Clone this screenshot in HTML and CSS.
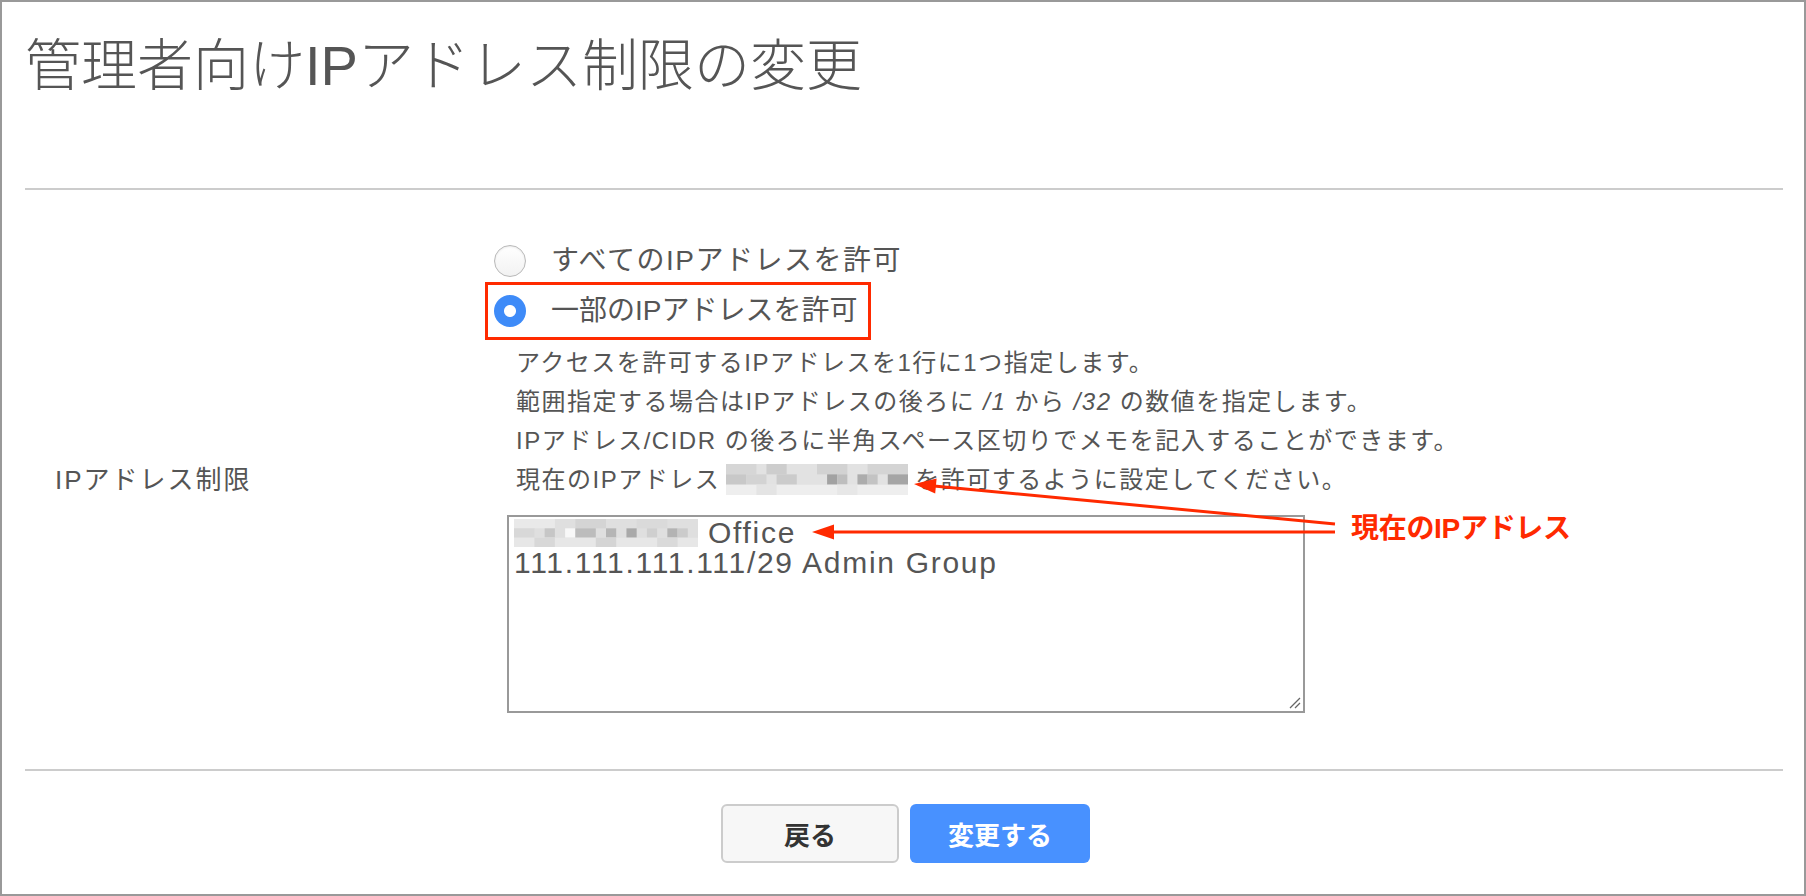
FILE: index.html
```html
<!DOCTYPE html>
<html lang="ja">
<head>
<meta charset="utf-8">
<title>管理者向けIPアドレス制限の変更</title>
<link rel="stylesheet" href="styles.css">
</head>
<body>
<div class="page">
  <h1 class="title">管理者向けIPアドレス制限の変更</h1>
  <div class="rule rule-top"></div>
  <div class="row">
    <div class="label">IPアドレス制限</div>
    <div class="field">
      <label class="radio radio-all"><span class="dot"></span><span class="radio-text">すべてのIPアドレスを許可</span></label>
      <label class="radio radio-some checked marked"><span class="dot"></span><span class="radio-text">一部のIPアドレスを許可</span></label>
      <div class="help">
        <p>アクセスを許可するIPアドレスを1行に1つ指定します。</p>
        <p>範囲指定する場合はIPアドレスの後ろに <i>/1</i> から <i>/32</i> の数値を指定します。</p>
        <p>IPアドレス/CIDR の後ろに半角スペース区切りでメモを記入することができます。</p>
        <p>現在のIPアドレス<svg class="mosaic mosaic-help" viewBox="0 0 18 3" preserveAspectRatio="none">
          <rect x="0" y="0" width="18" height="3" fill="#e2e2e2"/>
          <rect x="0" y="0" width="3" height="1" fill="#d6d6d6"/>
          <rect x="4" y="0" width="2" height="1" fill="#cdcdcd"/>
          <rect x="9" y="0" width="3" height="1" fill="#d2d2d2"/>
          <rect x="14" y="0" width="4" height="1" fill="#d4d4d4"/>
          <rect x="0" y="1" width="2" height="1" fill="#c8c8c8"/>
          <rect x="2" y="1" width="2" height="1" fill="#d3d3d3"/>
          <rect x="5" y="1" width="2" height="1" fill="#cbcbcb"/>
          <rect x="10" y="1" width="1" height="1" fill="#a2a2a2"/>
          <rect x="11" y="1" width="1" height="1" fill="#bebebe"/>
          <rect x="13" y="1" width="1" height="1" fill="#acacac"/>
          <rect x="14" y="1" width="1" height="1" fill="#c3c3c3"/>
          <rect x="16" y="1" width="2" height="1" fill="#a5a5a5"/>
          <rect x="0" y="2" width="18" height="1" fill="#eeeeee"/>
          <rect x="3" y="2" width="2" height="1" fill="#e4e4e4"/>
          <rect x="11" y="2" width="2" height="1" fill="#e7e7e7"/>
        </svg>を許可するように設定してください。</p>
      </div>
      <div class="textbox">
        <div class="tline"><svg class="mosaic mosaic-text" viewBox="0 0 18 3" preserveAspectRatio="none">
          <rect x="0" y="0" width="18" height="3" fill="#dfdfdf"/>
          <rect x="0" y="0" width="4" height="1" fill="#e9e9e9"/>
          <rect x="6" y="0" width="3" height="1" fill="#d4d4d4"/>
          <rect x="12" y="0" width="3" height="1" fill="#dadada"/>
          <rect x="0" y="1" width="2" height="1" fill="#d8d8d8"/>
          <rect x="3" y="1" width="1" height="1" fill="#c6c6c6"/>
          <rect x="5" y="1" width="1" height="1" fill="#f8f8f8"/>
          <rect x="6" y="1" width="2" height="1" fill="#bcbcbc"/>
          <rect x="9" y="1" width="1" height="1" fill="#b5b5b5"/>
          <rect x="11" y="1" width="1" height="1" fill="#a9a9a9"/>
          <rect x="13" y="1" width="1" height="1" fill="#cfcfcf"/>
          <rect x="15" y="1" width="1" height="1" fill="#b3b3b3"/>
          <rect x="16" y="1" width="1" height="1" fill="#cbcbcb"/>
          <rect x="0" y="2" width="18" height="1" fill="#e7e7e7"/>
          <rect x="2" y="2" width="2" height="1" fill="#d8d8d8"/>
          <rect x="8" y="2" width="2" height="1" fill="#d5d5d5"/>
          <rect x="14" y="2" width="2" height="1" fill="#dadada"/>
        </svg> Office</div>
        <div class="tline">111.111.111.111/29 Admin Group</div>
        <svg class="grip" viewBox="0 0 12 12"><path d="M1 11 L11 1 M6 11 L11 6" stroke="#666" stroke-width="1.3" fill="none"/></svg>
      </div>
    </div>
  </div>
  <div class="rule rule-bottom"></div>
  <div class="actions">
    <button class="btn btn-back" type="button">戻る</button>
    <button class="btn btn-submit" type="button">変更する</button>
  </div>
  <div class="annot">
    <svg class="annot-svg" width="1806" height="896" viewBox="0 0 1806 896">
      <line x1="1335" y1="524" x2="934" y2="486" stroke="#ff2a00" stroke-width="3"/>
      <polygon points="914,484 936.6,478.4 935.2,493.4" fill="#ff2a00"/>
      <line x1="1335" y1="532" x2="832" y2="532" stroke="#ff2a00" stroke-width="3"/>
      <polygon points="812,532 834,524.5 834,539.5" fill="#ff2a00"/>
    </svg>
    <span class="annot-label">現在のIPアドレス</span>
  </div>
</div>
</body>
</html>
```
FILE: styles.css
```css
html, body {
  margin: 0;
  padding: 0;
  background: #fff;
}

.page {
  position: relative;
  box-sizing: border-box;
  width: 1806px;
  height: 896px;
  border: 2px solid #999;
  background: #fff;
  color: #555;
  font-family: "Liberation Sans", "Noto Sans CJK JP", sans-serif;
  overflow: hidden;
}

.title {
  margin: 0;
  padding: 30px 0 0 23px;
  height: 67px;
  font-size: 56px;
  line-height: 67px;
  font-weight: 300;
  color: #555;
}

.rule {
  height: 2px;
  background: #ccc;
  margin: 0 21px 0 23px;
}

.rule-top {
  margin-top: 89px;
}

.row {
  display: flex;
  padding: 46px 0 56px 53px;
}

.label {
  width: 439px;
  flex: none;
  align-self: center;
  padding-top: 6px;
  font-size: 26px;
  letter-spacing: 2px;
  color: #555;
}

.field {
  display: flex;
  flex-direction: column;
  align-items: flex-start;
}

.radio {
  position: relative;
  display: flex;
  align-items: center;
  height: 50px;
  font-size: 28px;
  color: #555;
}

.radio-all {
  letter-spacing: 1.5px;
}

.radio-some {
  letter-spacing: 0;
}

.radio-text {
  position: relative;
  top: -3px;
}

.dot {
  width: 32px;
  height: 32px;
  box-sizing: border-box;
  border-radius: 50%;
  margin-right: 25px;
  border: 1px solid #b9b9b9;
  background: linear-gradient(#ffffff, #f2f2f2);
  box-shadow: inset 0 1px 2px rgba(0, 0, 0, 0.08);
}

.radio.checked .dot {
  border: none;
  box-shadow: none;
  background: radial-gradient(circle, #fff 0, #fff 5.5px, #3e8bf8 6.5px);
}

.radio.marked::before {
  content: "";
  position: absolute;
  top: -4px;
  bottom: -4px;
  left: -9px;
  right: -14px;
  border: 3px solid #ff2a00;
}

.help {
  margin: 7px 0 0 22px;
  font-size: 24px;
  line-height: 39px;
  letter-spacing: 1.5px;
  color: #555;
}

.help p {
  margin: 0;
  white-space: nowrap;
}

.mosaic {
  display: inline-block;
  vertical-align: middle;
}

.mosaic-help {
  width: 182px;
  height: 31px;
  margin: 0 7px 0 6px;
  position: relative;
  top: -2px;
}

.textbox {
  position: relative;
  margin: 16px 0 0 13px;
  width: 798px;
  height: 198px;
  box-sizing: border-box;
  border: 2px solid #999;
  padding: 1px 5px;
  font-size: 30px;
  line-height: 30px;
  letter-spacing: 1.7px;
  color: #555;
  background: #fff;
}

.tline {
  white-space: nowrap;
}

.mosaic-text {
  width: 184px;
  height: 28px;
  vertical-align: -4px;
}

.grip {
  position: absolute;
  right: 2px;
  bottom: 2px;
  width: 12px;
  height: 12px;
}

.actions {
  display: flex;
  justify-content: center;
  gap: 11px;
  padding: 33px 0 0 5px;
}

.btn {
  height: 59px;
  box-sizing: border-box;
  border-radius: 6px;
  font-family: "Liberation Sans", "Noto Sans CJK JP", sans-serif;
  font-size: 26px;
  font-weight: 700;
  display: flex;
  align-items: center;
  justify-content: center;
  padding: 0;
  margin: 0;
}

.btn-back {
  width: 178px;
  border: 2px solid #ccc;
  background: #f7f7f7;
  color: #333;
}

.btn-submit {
  width: 180px;
  border: none;
  background: #4891ff;
  color: #fff;
}

.annot {
  position: absolute;
  top: -2px;
  left: -2px;
  width: 1806px;
  height: 896px;
  pointer-events: none;
}

.annot-svg {
  position: absolute;
  top: 0;
  left: 0;
}

.annot-label {
  position: absolute;
  left: 1351px;
  top: 511px;
  font-size: 28px;
  line-height: 36px;
  font-weight: 700;
  letter-spacing: -0.3px;
  color: #ff2a00;
}
```
